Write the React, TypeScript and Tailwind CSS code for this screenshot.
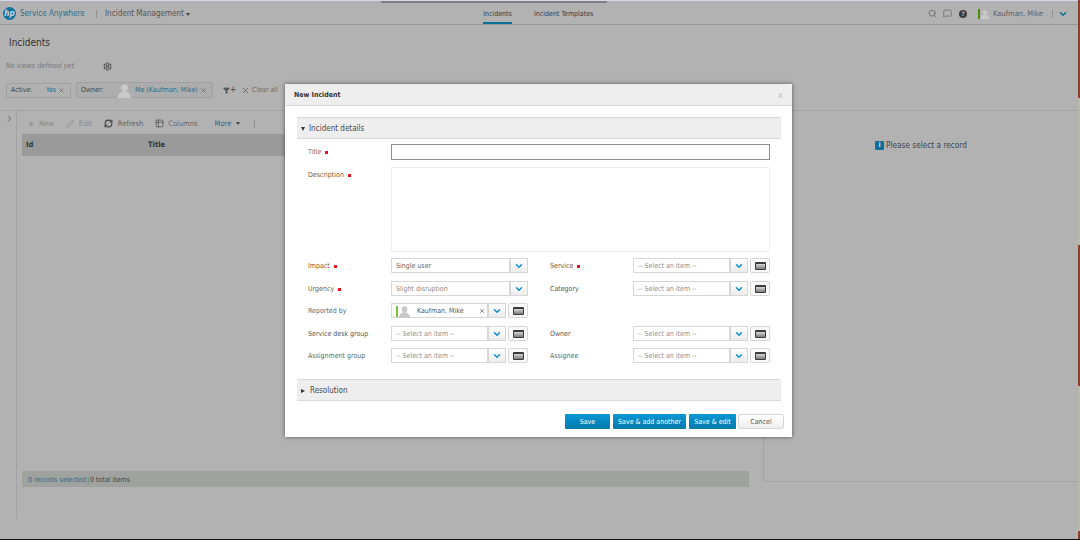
import React from "react";
import { Search, MessageSquare, ChevronRight, ChevronDown, X, RefreshCw, Pencil, Asterisk, Settings, Table2, Filter } from "lucide-react";

const font = "font-['DejaVu_Sans_Condensed','Roboto',sans-serif]";

function Person({ className = "" }: { className?: string }) {
  return (
    <svg viewBox="0 0 20 20" className={className}>
      <circle cx="10" cy="6.5" r="4.5" fill="#c9c9c9" />
      <path d="M1 20 C2 13 6 12 8 11 H12 C14 12 18 13 19 20 Z" fill="#c9c9c9" />
    </svg>
  );
}

function Req() {
  return <span className="ml-[4px] inline-block h-[3px] w-[3px] bg-[#e8101a]" />;
}

function Caret() {
  return (
    <div className="flex h-[15px] w-[18px] shrink-0 items-center justify-center border border-[#d6d6d6] bg-gradient-to-b from-[#ffffff] to-[#ececec]">
      <ChevronDown size={10} strokeWidth={3.5} className="text-[#0d8fd0]" />
    </div>
  );
}

function Pick() {
  return (
    <div className="ml-[2px] flex h-[15px] w-[20px] shrink-0 items-center justify-center rounded-[2px] border border-[#d6d6d6] bg-[#fafafa]">
      <div className="h-[8px] w-[11px] rounded-[1px] border border-[#3c3c3c] border-t-[2px] bg-gradient-to-b from-[#d8d8d8] to-[#7c7c7c]" />
    </div>
  );
}

function Field({ text = "-- Select an item --" }: { text?: string }) {
  return (
    <div className="flex w-[137px]">
      <div className="flex h-[15px] w-[97px] items-center whitespace-nowrap border border-[#d6d6d6] pl-[4px] pt-[1px] text-[7px] text-[#8f8f8f]">{text}</div>
      <Caret />
      <Pick />
    </div>
  );
}

function Single({ text, tone }: { text: string; tone: string }) {
  return (
    <div className="flex w-[137px]">
      <div className={`flex h-[15px] w-[119px] items-center border border-[#d6d6d6] pl-[4px] pt-[1px] text-[7px] ${tone}`}>{text}</div>
      <Caret />
    </div>
  );
}

function Label({ text, req, tone = "text-[#6a6a6a]" }: { text: string; req?: boolean; tone?: string }) {
  return (
    <div className={`flex h-[15px] items-center whitespace-nowrap pt-[1px] text-[7px] ${tone}`}>
      {text}
      {req && <Req />}
    </div>
  );
}

function Btn({ w, text }: { w: string; text: string }) {
  return (
    <button className={`${w} flex h-[15px] items-center justify-center whitespace-nowrap rounded-[1px] bg-gradient-to-b from-[#0b98d6] to-[#0479ac] pt-[1px] text-[7px] text-white`}>
      {text}
    </button>
  );
}

export default function App() {
  return (
    <div className={`${font} relative flex h-[540px] w-[1080px] flex-col overflow-hidden whitespace-nowrap bg-[#b2b2b2] text-[#3f3f3f]`}>
      <div className="h-[1px] shrink-0 bg-[#d5d5ea]" />
      {/* top bar */}
      <header className="relative flex h-[24px] shrink-0 items-center border-b border-[#989898] pl-[3px] pt-[2px]">
        <div className="absolute left-[381px] top-0 h-[2px] w-[226px] bg-[#7f7f7f]" />
        <div className="flex h-[13px] w-[13px] items-center justify-center rounded-full bg-[#11709e] text-[8px] font-bold italic leading-none text-[#c8d8e2]">hp</div>
        <span className="ml-[4px] w-[66px] pt-[1px] text-[8px] text-[#2d6f8e]">Service Anywhere</span>
        <div className="ml-[10px] h-[8px] w-[1px] bg-[#8f8f8f]" />
        <span className="ml-[8px] w-[79px] pt-[1px] text-[8px] text-[#555]">Incident Management</span>
        <span className="ml-[2px] mt-[2px] h-0 w-0 border-x-[2.5px] border-t-[3px] border-x-transparent border-t-[#444]" />
        <nav className="ml-[293px] flex h-full items-stretch gap-[22px] text-[7px] font-medium text-[#3a3a45]">
          <div className="flex w-[29px] items-center justify-center border-b-2 border-[#0a6f96] pt-[3px]">Incidents</div>
          <div className="flex items-center pt-[1px]">Incident Templates</div>
        </nav>
        <div className="ml-auto flex items-center pr-[12px]">
          <Search size={9} className="text-[#666]" />
          <MessageSquare size={9} className="ml-[6px] text-[#666]" />
          <div className="ml-[7px] flex h-[8px] w-[8px] items-center justify-center rounded-full bg-[#3c3c3c] text-[6px] font-bold text-[#bbb]">?</div>
          <div className="ml-[11px] h-[10px] w-[2px] bg-[#4f8a10]" />
          <Person className="h-[10px] w-[10px]" />
          <span className="ml-[3px] w-[49px] pt-[1px] text-[7.5px] text-[#5f5f5f]">Kaufman, Mike</span>
          <div className="ml-[10px] h-[8px] w-[1px] bg-[#8f8f8f]" />
          <ChevronDown size={10} strokeWidth={3.5} className="ml-[5px] text-[#0a6f96]" />
        </div>
      </header>

      <h1 className="mt-[10px] pl-[9px] text-[10px] leading-[15px] text-[#333]">Incidents</h1>
      <div className="mt-[11px] flex h-[10px] items-center pl-[6px] text-[7.2px] italic text-[#777]">
        <span className="w-[97px]">No views defined yet</span>
        <Settings size={9} strokeWidth={3} className="mt-[1px] text-[#5f5f5f]" />
      </div>

      {/* filters */}
      <div className="mt-[11px] flex h-[16px] items-center pl-[6px] text-[7px]">
        <div className="flex h-[15px] w-[65px] items-center rounded-[2px] border border-[#a0a0a0] pl-[4px] pt-[1px]">
          <span className="w-[35px] text-[#444]">Active:</span>
          <span className="text-[#1f6d90]">Yes</span>
          <X size={7} className="ml-[2px] text-[#555]" />
        </div>
        <div className="ml-[5px] flex h-[16px] w-[137px] items-center rounded-[2px] border border-[#a0a0a0] bg-[#adadad] pl-[4px]">
          <span className="w-[36px] text-[#444]">Owner:</span>
          <Person className="h-[15px] w-[15px]" />
          <span className="ml-[3px] text-[#1f6d90]">Me (Kaufman, Mike)</span>
          <X size={7} className="ml-[2px] text-[#555]" />
        </div>
        <Filter size={7} fill="#555" className="ml-[10px] text-[#555]" />
        <span className="text-[8px] font-bold text-[#555]">+</span>
        <X size={9} className="ml-[5px] text-[#555]" />
        <span className="ml-[2px] pt-[1px] text-[7px] text-[#6a6a6a]">Clear all</span>
      </div>

      {/* main */}
      <div className="mt-[12px] flex h-[409px] border-t border-[#a3a3a3]">
        <div className="w-[17px] shrink-0 border-r border-[#a3a3a3] pl-[5px] pt-[3px]">
          <ChevronRight size={9} strokeWidth={3.5} className="text-[#858585]" />
        </div>
        <div className="flex w-[732px] shrink-0 flex-col pl-[5px]">
          <div className="flex h-[23px] items-center pl-[4px] pt-[2px] text-[7.5px] text-[#8a8a8a]">
            <Asterisk size={10} className="text-[#8e8e8e]" />
            <span className="ml-[3px]">New</span>
            <Pencil size={8} className="ml-[12px] text-[#8e8e8e]" />
            <span className="ml-[5px]">Edit</span>
            <RefreshCw size={9} strokeWidth={3} className="ml-[12px] text-[#444]" />
            <span className="ml-[5px] text-[#666]">Refresh</span>
            <Table2 size={9} className="ml-[12px] text-[#555]" />
            <span className="ml-[4px] text-[#666]">Columns</span>
            <span className="ml-[17px] text-[#2c6c8a]">More</span>
            <span className="ml-[5px] h-0 w-0 border-x-[2.5px] border-t-[3px] border-x-transparent border-t-[#444]" />
            <div className="ml-[14px] h-[8px] w-[1px] bg-[#8f8f8f]" />
          </div>
          <div className="flex h-[22px] items-center bg-[#999a99] text-[7.5px] font-bold text-[#333]">
            <span className="w-[126px] pl-[4px]">Id</span>
            <span>Title</span>
          </div>
          <div className="flex-1" />
          <div className="mb-[32px] flex h-[16px] items-center bg-[#a0a29f] pl-[6px] pt-[2px] text-[7px] text-[#444]">
            <span className="text-[#2b6c8d]">0 records selected</span>
            <span className="mx-[1px] text-[#2b6c8d]">|</span>
            <span>0 total items</span>
          </div>
        </div>
        <div className="ml-[14px] mb-[37px] flex flex-1 flex-col items-center border-l border-b border-[#a3a3a3] pr-[2px]">
          <div className="mt-[28px] flex items-center text-[8.2px] text-[#3c4650]">
            <div className="mr-[2px] flex h-[9px] w-[9px] items-center justify-center rounded-[1px] bg-[#116f9b] text-[7px] font-bold text-[#cfe0e8]">i</div>
            Please select a record
          </div>
        </div>
      </div>

      {/* right edge & bottom edge */}
      <div className="absolute right-0 top-0 h-[540px] w-[2px] bg-[linear-gradient(180deg,#8c3f2c_0_98px,#b9b9a8_98px_245px,#8c3f2c_245px_386px,#b9b9a8_386px_531px,#8c3f2c_531px)]" />
      <div className="absolute bottom-0 left-0 h-[1px] w-full bg-[#111]" />

      {/* modal */}
      <div className="absolute left-[285px] top-[84px] flex h-[353px] w-[507px] flex-col bg-white shadow-[0_0_4px_rgba(0,0,0,0.55)]">
        <div className="flex h-[22px] shrink-0 items-center justify-between border-b border-[#d8d8d8] bg-[#eeeeee] pl-[9px] pr-[8px] pt-[2px] text-[7px] font-bold text-[#333]">
          New Incident
          <X size={7} strokeWidth={3.5} className="text-[#bbb]" />
        </div>
        <div className="ml-[12px] mr-[11px] mt-[11px] flex h-[22px] items-center border-y border-[#d8d8d8] bg-[#eeeeee] pl-[4px] pt-[1px] text-[8px] text-[#4a4a4a]">
          <span className="h-0 w-0 border-x-[2.5px] border-t-[4px] border-x-transparent border-t-[#333]" />
          <span className="ml-[4px]">Incident details</span>
        </div>
        <div className="ml-[23px] mt-[5px] flex h-[16px] w-[462px]">
          <div className="w-[83px]"><Label text="Title" req tone="text-[#8a6a50]" /></div>
          <div className="h-[16px] w-[379px] border border-[#8e8e8e]" />
        </div>
        <div className="ml-[23px] mt-[7px] flex h-[85px] w-[462px]">
          <div className="w-[83px]"><Label text="Description" req tone="text-[#7a5a3a]" /></div>
          <div className="h-[85px] w-[379px] border border-[#eeeeee]" />
        </div>
        <div className="ml-[23px] mt-[6px] grid grid-cols-[83px_137px_22px_83px_137px] grid-rows-[23px_22px_23px_22px_15px]">
          <Label text="Impact" req tone="text-[#8a5a20]" />
          <Single text="Single user" tone="text-[#666]" />
          <div />
          <Label text="Service" req tone="text-[#6a5a40]" />
          <Field />

          <Label text="Urgency" req tone="text-[#7a5a20]" />
          <Single text="Slight disruption" tone="text-[#8a8a8a]" />
          <div />
          <Label text="Category" tone="text-[#505a5a]" />
          <Field />

          <Label text="Reported by" tone="text-[#5a6a78]" />
          <div className="flex w-[137px]">
            <div className="flex h-[15px] w-[97px] items-center border border-[#d6d6d6] pl-[4px] pt-[1px] text-[7px] text-[#555]">
              <div className="h-[11px] w-[2px] bg-[#7ec242]" />
              <Person className="h-[13px] w-[13px]" />
              <span className="ml-[6px]">Kaufman, Mike</span>
              <X size={6} strokeWidth={3.5} className="ml-auto mr-[2px] text-[#777]" />
            </div>
            <Caret />
            <Pick />
          </div>
          <div />
          <div />
          <div />

          <Label text="Service desk group" tone="text-[#555]" />
          <Field />
          <div />
          <Label text="Owner" tone="text-[#555]" />
          <Field />

          <Label text="Assignment group" tone="text-[#5a6a5a]" />
          <Field />
          <div />
          <Label text="Assignee" tone="text-[#3f6f7a]" />
          <Field />
        </div>
        <div className="ml-[12px] mr-[11px] mt-[16px] flex h-[22px] items-center border-y border-[#d8d8d8] bg-[#eeeeee] pl-[4px] pt-[1px] text-[8px] text-[#4a4a4a]">
          <span className="h-0 w-0 border-y-[2.5px] border-l-[4px] border-y-transparent border-l-[#333]" />
          <span className="ml-[5px]">Resolution</span>
        </div>
        <div className="ml-[280px] mt-[13px] flex gap-[3px]">
          <Btn w="w-[45px]" text="Save" />
          <Btn w="w-[73px]" text="Save & add another" />
          <Btn w="w-[47px]" text="Save & edit" />
          <button className="ml-[-1px] flex h-[15px] w-[46px] items-center justify-center rounded-[2px] border border-[#d6d6d6] bg-gradient-to-b from-white to-[#eeeeee] pt-[1px] text-[7px] text-[#555]">Cancel</button>
        </div>
      </div>
    </div>
  );
}
